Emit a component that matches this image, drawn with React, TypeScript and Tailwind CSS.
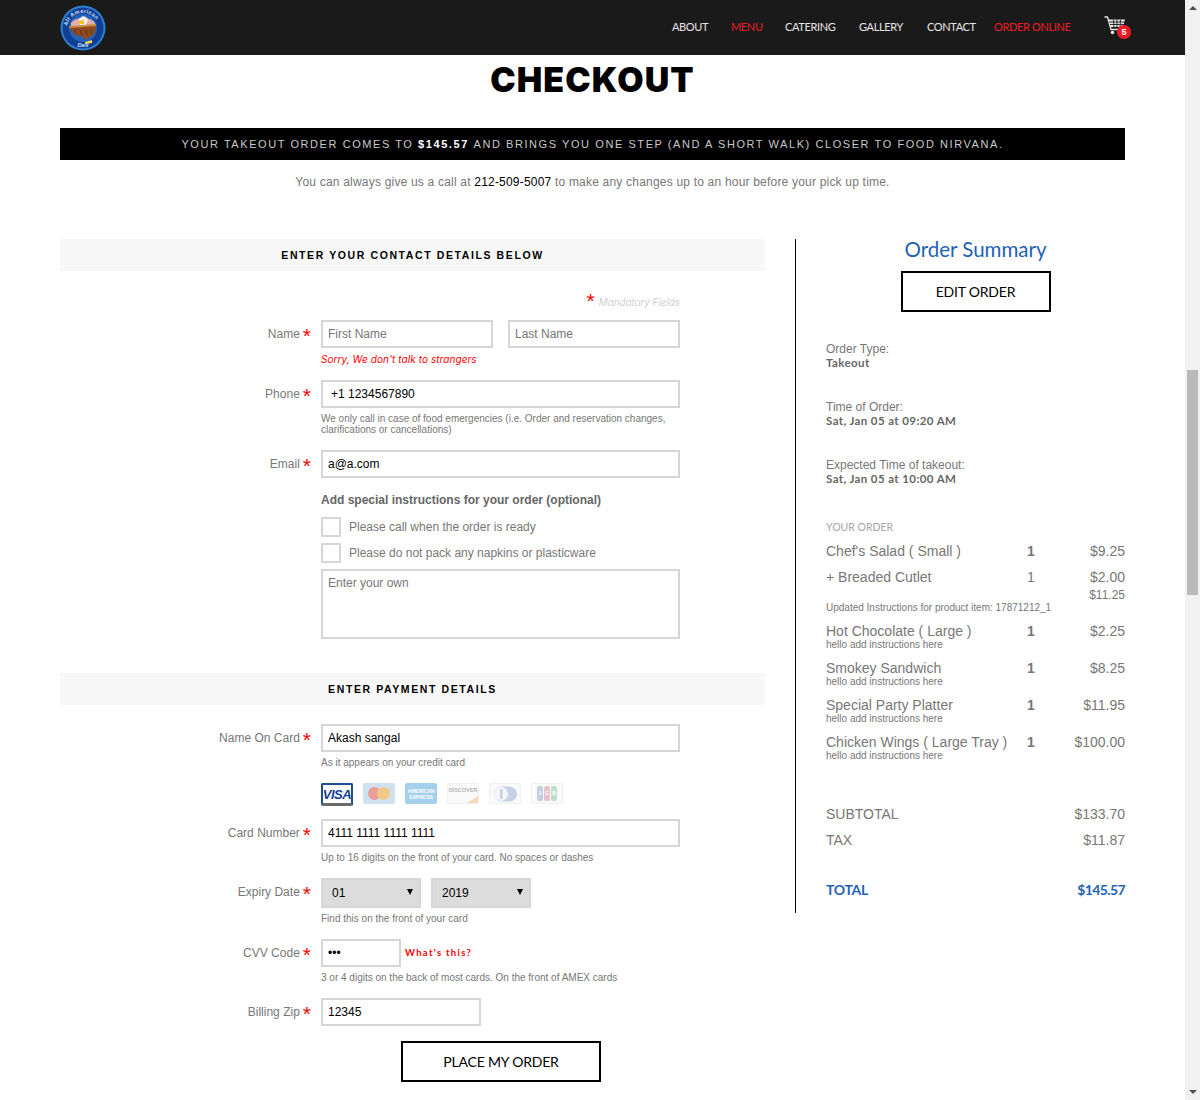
import React from 'react'

const nav = [
  { label: 'ABOUT', cls: 'text-[#e6e6e6] w-[36px]', gap: 'ml-0' },
  { label: 'MENU', cls: 'text-[#ed1c24] w-[31px]', gap: 'ml-[23px]' },
  { label: 'CATERING', cls: 'text-[#e6e6e6] w-[51px]', gap: 'ml-[23px]' },
  { label: 'GALLERY', cls: 'text-[#e6e6e6] w-[45px]', gap: 'ml-[23px]' },
  { label: 'CONTACT', cls: 'text-[#e6e6e6] w-[48px]', gap: 'ml-[23px]' },
  { label: 'ORDER ONLINE', cls: 'text-[#ed1c24] w-[77px]', gap: 'ml-[19px]' },
]

const orderItems = [
  { name: 'Hot Chocolate ( Large )', price: '$2.25' },
  { name: 'Smokey Sandwich', price: '$8.25' },
  { name: 'Special Party Platter', price: '$11.95' },
  { name: 'Chicken Wings ( Large Tray )', price: '$100.00' },
]

function Logo() {
  return (
    <svg width="46" height="46" viewBox="0 0 46 46" className="shrink-0">
      <defs>
        <path id="logoTop" d="M7 24 A16 16 0 0 1 39 24" />
      </defs>
      <circle cx="23" cy="23" r="22.5" fill="#2f7fd1" />
      <circle cx="23" cy="23" r="20.5" fill="#123f96" />
      <circle cx="23" cy="23" r="14" fill="#2563b8" />
      <path d="M11 18 C15 12 30 11 35 18 L35 22 L11 22 Z" fill="#e3b0b0" />
      <path d="M19 15 C21 10 26 10 28 15 L26 20 L20 20 Z" fill="#f4f0e6" />
      <path d="M19 16 L24 15 L24 19 L19 19 Z" fill="#f2c81e" />
      <path d="M9 21 L36 19 L36 22 L10 24 Z" fill="#c98d3c" />
      <path d="M10 23 L36 21 C36 28 33 31 29 32 L26 35 L22 31 C17 32 13 29 10 23 Z" fill="#8d4a1f" />
      <path d="M14 25 L17 29 M20 25 L22 30 M26 25 L27 30 M31 24 L31 29" stroke="#5f2f12" strokeWidth="1" />
      <path d="M25 37 L32 35 L32 38 L25 39 Z" fill="#f2d64b" />
      <text fontSize="5.4" fontWeight="700" fill="#cfe0f6" fontFamily="Liberation Sans, sans-serif" letterSpacing="0.4">
        <textPath href="#logoTop" startOffset="3">All American</textPath>
      </text>
      <text x="23" y="41.5" textAnchor="middle" fontSize="6" fontWeight="700" fontStyle="italic" fill="#cfe0f6" fontFamily="Liberation Sans, sans-serif">Deli</text>
    </svg>
  )
}

function Cart() {
  return (
    <svg width="22" height="20" viewBox="0 0 22 20" fill="none" stroke="#e8e8e8" className="block">
      <path d="M0.5 1 H3.5 L7 13.5 H19" strokeWidth="1.3" />
      <path d="M4.5 3.5 H21 L19 11 H6.5 Z" fill="#e8e8e8" stroke="none" />
      <path d="M5 6 H21 M6 8.5 H20 M9.5 3.5 L10 11 M13 3.5 V11 M16.5 3.5 L16 11" stroke="#1a1a1a" strokeWidth="0.9" />
      <circle cx="8.5" cy="16.5" r="1.8" fill="#e8e8e8" stroke="none" />
      <circle cx="17" cy="16.5" r="1.8" fill="#e8e8e8" stroke="none" />
    </svg>
  )
}

function Star() {
  return <span className="text-[#ff0000] text-[21px] leading-none ml-[3px] relative top-[1px]">*</span>
}

function Label({ text }: { text: string }) {
  return (
    <div className="w-[251px] shrink-0 mr-[10px] h-[28px] flex items-center justify-end text-[12px] text-[#777777]">
      {text}
      <Star />
    </div>
  )
}

function Help({ children }: { children: React.ReactNode }) {
  return <p className="ml-[261px] mt-[5px] text-[10px] leading-[11px] text-[#777777]">{children}</p>
}

const inputCls =
  "h-[28px] border-2 border-[#d6d6d6] bg-white px-[5px] text-[12px] text-black placeholder:text-[#777777] outline-none font-['Liberation_Sans']"

function SectionHead({ title }: { title: string }) {
  return (
    <div className="h-[32px] pt-[1px] bg-[#f7f7f7] flex items-center justify-center text-[10.5px] font-bold tracking-[1.6px] text-black">
      {title}
    </div>
  )
}

function CardIcons() {
  const base = 'w-[32px] h-[21px] rounded-[2px] shrink-0 flex items-center justify-center overflow-hidden relative'
  return (
    <div className="ml-[261px] mt-[15px] flex gap-[10px] h-[23px] items-start">
      <div className={`${base} h-[23px] bg-white border-2 border-[#1c4f8f] border-b-[3px] border-b-[#6b6b6b]`}>
        <span className="text-[#15408f] font-bold italic text-[13px] tracking-[-0.5px] leading-none">VISA</span>
      </div>
      <div className={`${base} bg-[#cfe0ee]`}>
        <span className="w-[13px] h-[13px] rounded-full bg-[#eb9f96]" />
        <span className="w-[13px] h-[13px] rounded-full bg-[#f3c98a] -ml-[4px]" />
      </div>
      <div className={`${base} bg-[#a5d0ec] flex-col`}>
        <span className="text-white text-[5px] leading-[6px] font-bold">AMERICAN</span>
        <span className="text-white text-[5px] leading-[6px] font-bold">EXPRESS</span>
      </div>
      <div className={`${base} bg-[#fafafa] border border-[#f0f0f0] items-start pt-[3px]`}>
        <span className="text-[#b5b5b5] text-[5.5px] leading-[6px] font-bold">DISCOVER</span>
        <svg className="absolute inset-0" width="32" height="21" viewBox="0 0 32 21">
          <path d="M10 21 C20 19 28 15 32 9 V21 Z" fill="#f8d9b8" />
        </svg>
      </div>
      <div className={`${base} bg-[#fafafa] border border-[#f0f0f0]`}>
        <svg width="26" height="16" viewBox="0 0 26 16">
          <rect x="2" y="0.5" width="23" height="15" rx="7.5" fill="#c6d1e5" />
          <circle cx="9" cy="8" r="7" fill="#f4f6fa" />
          <rect x="8" y="3" width="2.6" height="10" fill="#c6d1e5" />
        </svg>
      </div>
      <div className={`${base} bg-[#fafafa] border border-[#f0f0f0] gap-[1px]`}>
        <span className="w-[6px] h-[15px] rounded-[2px] bg-[#c5cde0] text-white text-[5px] font-bold leading-[15px] text-center">J</span>
        <span className="w-[6px] h-[15px] rounded-[2px] bg-[#e6c3cb] text-white text-[5px] font-bold leading-[15px] text-center">C</span>
        <span className="w-[6px] h-[15px] rounded-[2px] bg-[#bfe0c8] text-white text-[5px] font-bold leading-[15px] text-center">B</span>
      </div>
    </div>
  )
}

function DateSelect({ value }: { value: string }) {
  return (
    <div className="relative w-[100px] h-[30px]">
      <select
        defaultValue={value}
        className="appearance-none w-full h-full border-2 border-[#d6d6d6] bg-[#dcdcdc] pl-[9px] text-[12px] text-black outline-none font-['Liberation_Sans']"
      >
        <option>{value}</option>
      </select>
      <span className="absolute right-[8px] top-[11px] w-0 h-0 border-x-[3.5px] border-x-transparent border-t-[6px] border-t-black" />
    </div>
  )
}

function InfoBlock({ label, value }: { label: string; value: string }) {
  return (
    <div className="mt-[30px]">
      <p className="text-[12px] leading-[14px] text-[#777777]">{label}</p>
      <p className="text-[11.5px] leading-[14px] tracking-[0.4px] font-bold text-[#666666] font-['Lato']">{value}</p>
    </div>
  )
}

function Row({ name, qty, price, boldQty = true, mt }: { name: string; qty: string; price: string; boldQty?: boolean; mt?: string }) {
  return (
    <div className={`flex h-[16px] items-center text-[14px] leading-[16px] text-[#777777] ${mt ?? ''}`}>
      <span className="w-[195px] whitespace-nowrap">{name}</span>
      <span className={`w-[20px] text-center ${boldQty ? 'font-bold' : ''}`}>{qty}</span>
      <span className="w-[84px] text-right">{price}</span>
    </div>
  )
}

export default function App() {
  return (
    <div className="w-[1200px] h-[1100px] overflow-hidden flex bg-white font-['Liberation_Sans',sans-serif]">
      <main className="w-[1185px] shrink-0">
        <header className="h-[55px] bg-[#1a1a1a] flex items-center pl-[60px]">
          <Logo />
          <nav className="ml-[566px] flex items-center font-['Lato',sans-serif] text-[11px] tracking-[-0.35px]">
            {nav.map(item => (
              <a key={item.label} className={`${item.cls} ${item.gap} whitespace-nowrap`}>{item.label}</a>
            ))}
          </nav>
          <div className="relative ml-[33px] mb-[3px]">
            <Cart />
            <span className="absolute -right-[5px] top-[9px] w-[14px] h-[14px] rounded-full bg-[#ed1c24] text-white text-[9px] font-bold leading-[14px] text-center">5</span>
          </div>
        </header>

        <h1 className="mt-[5px] h-[40px] text-center text-[34px] leading-[40px] font-black tracking-[1.1px] text-black font-['Inter',sans-serif]">CHECKOUT</h1>

        <div className="mx-[60px] mt-[28px] h-[32px] pt-[1px] bg-black flex items-center justify-center text-[11px] tracking-[1.57px] text-[#c9c9c9]">
          YOUR TAKEOUT ORDER COMES TO&nbsp;<b className="text-white">$145.57</b>&nbsp;AND BRINGS YOU ONE STEP (AND A SHORT WALK) CLOSER TO FOOD NIRVANA.
        </div>

        <p className="mt-[15px] text-center text-[12px] leading-[14px] tracking-[0.2px] text-[#777777]">
          You can always give us a call at <span className="text-black">212-509-5007</span> to make any changes up to an hour before your pick up time.
        </p>

        <div className="mx-[60px] mt-[50px] flex items-start">
          <section className="w-[705px] shrink-0">
            <SectionHead title="ENTER YOUR CONTACT DETAILS BELOW" />

            <div className="mt-[19px] h-[18px] pr-[85px] flex justify-end items-center font-['Inter',sans-serif] italic text-[10px] font-light text-[#c4c4c4]">
              <span className="text-[#ff0000] text-[21px] leading-none not-italic font-normal relative top-[1px] mr-[4px] font-['Liberation_Sans']">*</span>
              <span className="relative top-[3px]">Mandatory Fields</span>
            </div>

            <div className="mt-[12px] flex">
              <Label text="Name" />
              <input className={`${inputCls} w-[172px]`} placeholder="First Name" />
              <input className={`${inputCls} w-[172px] ml-[15px]`} placeholder="Last Name" />
            </div>
            <p className="ml-[261px] mt-[5px] h-[12px] text-[10px] leading-[12px] tracking-[0.07px] italic text-[#ff0000] font-['Inter',sans-serif]">Sorry, We don't talk to strangers</p>

            <div className="mt-[15px] flex">
              <Label text="Phone" />
              <input className={`${inputCls} w-[359px] pl-[8px]`} defaultValue="+1 1234567890" />
            </div>
            <Help>We only call in case of food emergencies (i.e. Order and reservation changes,<br />clarifications or cancellations)</Help>

            <div className="mt-[15px] flex">
              <Label text="Email" />
              <input className={`${inputCls} w-[359px]`} defaultValue="a@a.com" />
            </div>

            <p className="ml-[261px] mt-[15px] text-[12px] leading-[14px] font-bold text-[#666666]">Add special instructions for your order (optional)</p>
            <label className="ml-[261px] mt-[10px] flex items-center h-[20px] text-[12px] text-[#777777]">
              <span className="w-[20px] h-[20px] border-2 border-[#d6d6d6] mr-[8px]" />
              Please call when the order is ready
            </label>
            <label className="ml-[261px] mt-[6px] flex items-center h-[20px] text-[12px] text-[#777777]">
              <span className="w-[20px] h-[20px] border-2 border-[#d6d6d6] mr-[8px]" />
              Please do not pack any napkins or plasticware
            </label>
            <textarea
              className="block ml-[261px] mt-[6px] w-[359px] h-[70px] border-2 border-[#d6d6d6] px-[5px] py-[5px] text-[12px] leading-[14px] placeholder:text-[#777777] outline-none resize-none"
              placeholder="Enter your own"
            />

            <div className="mt-[34px]">
              <SectionHead title="ENTER PAYMENT DETAILS" />
            </div>

            <div className="mt-[19px] flex">
              <Label text="Name On Card" />
              <input className={`${inputCls} w-[359px]`} defaultValue="Akash sangal" />
            </div>
            <Help>As it appears on your credit card</Help>

            <CardIcons />

            <div className="mt-[13px] flex">
              <Label text="Card Number" />
              <input className={`${inputCls} w-[359px]`} defaultValue="4111 1111 1111 1111" />
            </div>
            <Help>Up to 16 digits on the front of your card. No spaces or dashes</Help>

            <div className="mt-[15px] flex">
              <Label text="Expiry Date" />
              <div className="flex gap-[10px]">
                <DateSelect value="01" />
                <DateSelect value="2019" />
              </div>
            </div>
            <Help>Find this on the front of your card</Help>

            <div className="mt-[15px] flex">
              <Label text="CVV Code" />
              <input type="password" className={`${inputCls} w-[80px]`} defaultValue="123" />
              <a className="ml-[4px] self-center text-[9.5px] font-bold tracking-[1.3px] text-[#ff0000] font-['Lato',sans-serif]">What's this?</a>
            </div>
            <Help>3 or 4 digits on the back of most cards. On the front of AMEX cards</Help>

            <div className="mt-[15px] flex">
              <Label text="Billing Zip" />
              <input className={`${inputCls} w-[160px]`} defaultValue="12345" />
            </div>

            <button className="block ml-[341px] mt-[15px] w-[200px] h-[41px] border-2 border-black bg-white text-[14px] tracking-[-0.2px] text-black font-['Lato',sans-serif]">PLACE MY ORDER</button>
          </section>

          <aside className="ml-[30px] w-[330px] h-[674px] border-l border-black pl-[30px]">
            <h2 className="text-center text-[20.5px] leading-[20px] text-[#1f63b5] font-['Lato',sans-serif]">Order Summary</h2>
            <button className="block mx-auto mt-[12px] w-[150px] h-[41px] border-2 border-black bg-white text-[14px] tracking-[-0.2px] text-black font-['Lato',sans-serif]">EDIT ORDER</button>

            <InfoBlock label="Order Type:" value="Takeout" />
            <InfoBlock label="Time of Order:" value="Sat, Jan 05 at 09:20 AM" />
            <InfoBlock label="Expected Time of takeout:" value="Sat, Jan 05 at 10:00 AM" />

            <p className="mt-[35px] text-[10.5px] leading-[12px] text-[#a6a6a6] font-['Lato',sans-serif]">YOUR ORDER</p>

            <Row mt="mt-[10px]" name="Chef's Salad ( Small )" qty="1" price="$9.25" />
            <Row mt="mt-[10px]" name="+ Breaded Cutlet" qty="1" price="$2.00" boldQty={false} />
            <p className="mt-[4px] h-[12px] text-right text-[12px] leading-[12px] text-[#777777]">$11.25</p>
            <p className="mt-[1px] h-[11px] text-[10px] leading-[12px] text-[#777777]">Updated Instructions for product item: 17871212_1</p>

            {orderItems.map(item => (
              <div key={item.name} className="mt-[10px]">
                <Row name={item.name} qty="1" price={item.price} />
                <p className="mt-[1px] text-[10px] leading-[10px] text-[#777777]">hello add instructions here</p>
              </div>
            ))}

            <Row mt="mt-[45px]" name="SUBTOTAL" qty="" price="$133.70" />
            <Row mt="mt-[10px]" name="TAX" qty="" price="$11.87" />

            <div className="mt-[34px] flex justify-between text-[14px] leading-[16px] font-bold text-[#1f63b5] font-['Lato',sans-serif]">
              <span className="tracking-[-0.3px]">TOTAL</span>
              <span className="tracking-[-0.6px]">$145.57</span>
            </div>
          </aside>
        </div>
      </main>

      <div className="w-[15px] shrink-0 h-[1100px] bg-[#f1f1f1] flex flex-col items-center relative">
        <span className="mt-[6px] w-0 h-0 border-x-[4px] border-x-transparent border-b-[4px] border-b-[#505050]" />
        <div className="mt-[360px] w-[11px] h-[225px] bg-[#bababa]" />
        <span className="absolute bottom-[6px] w-0 h-0 border-x-[4px] border-x-transparent border-t-[4px] border-t-[#505050]" />
      </div>
    </div>
  )
}
